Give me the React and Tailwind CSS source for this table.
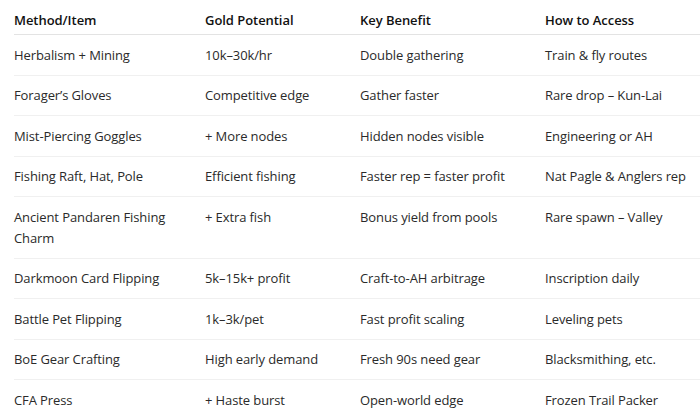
import React from "react";

const rows = [
  ["Herbalism + Mining", "10k–30k/hr", "Double gathering", "Train & fly routes"],
  ["Forager’s Gloves", "Competitive edge", "Gather faster", "Rare drop – Kun-Lai"],
  ["Mist-Piercing Goggles", "+ More nodes", "Hidden nodes visible", "Engineering or AH"],
  ["Fishing Raft, Hat, Pole", "Efficient fishing", "Faster rep = faster profit", "Nat Pagle & Anglers rep"],
  ["Ancient Pandaren Fishing Charm", "+ Extra fish", "Bonus yield from pools", "Rare spawn – Valley"],
  ["Darkmoon Card Flipping", "5k–15k+ profit", "Craft-to-AH arbitrage", "Inscription daily"],
  ["Battle Pet Flipping", "1k–3k/pet", "Fast profit scaling", "Leveling pets"],
  ["BoE Gear Crafting", "High early demand", "Fresh 90s need gear", "Blacksmithing, etc."],
  ["CFA Press", "+ Haste burst", "Open-world edge", "Frozen Trail Packer"],
];

const headers = ["Method/Item", "Gold Potential", "Key Benefit", "How to Access"];

export default function App() {
  return (
    <div
      className="w-[700px] h-[417px] overflow-hidden bg-white pl-[14px]"
      style={{ fontFamily: '"Open Sans", "Noto Sans", sans-serif' }}
    >
      <div className="grid grid-cols-[191px_155px_185px_1fr] border-b-[1.5px] border-[#e3e3e3] pt-[10px] pb-[3px] text-[13px] leading-[21px] font-semibold tracking-[-0.05px] text-[#111]">
        {headers.map((h) => (
          <div key={h}>{h}</div>
        ))}
      </div>
      {rows.map((r, i) => (
        <div
          key={i}
          className="grid grid-cols-[191px_155px_185px_1fr] border-b border-[#f0f0f0] pt-[9.5px] pb-[9px] text-[13px] leading-[21px] tracking-[-0.1px] text-[#2a2a2a]"
        >
          <div className="pr-[30px]">{r[0]}</div>
          <div>{r[1]}</div>
          <div>{r[2]}</div>
          <div>{r[3]}</div>
        </div>
      ))}
    </div>
  );
}
